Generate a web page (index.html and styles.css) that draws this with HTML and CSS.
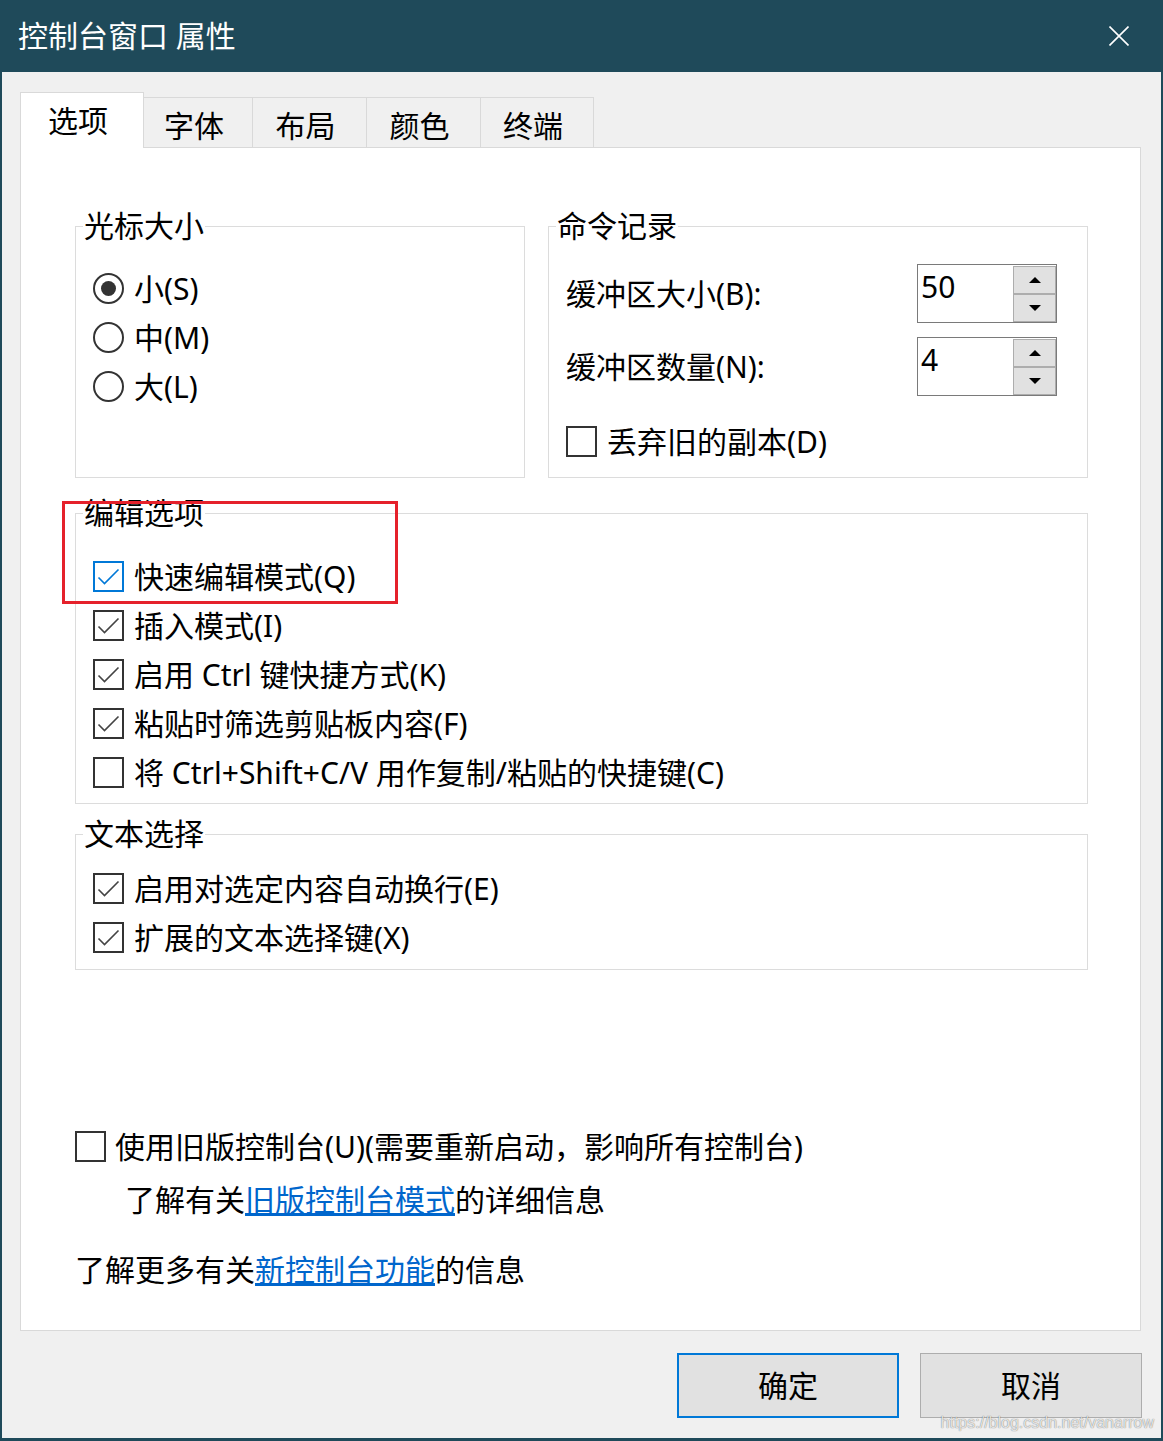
FILE: index.html
```html
<!DOCTYPE html>
<html lang="zh-CN">
<head>
<meta charset="utf-8">
<title>控制台窗口 属性</title>
<link rel="stylesheet" href="styles.css">
</head>
<body>
<div class="window">
  <div class="titlebar">
    <span class="title">控制台窗口 属性</span>
    <svg class="close" width="20" height="20" viewBox="0 0 20 20"><path d="M0.5 0.5 L19.5 19.5 M19.5 0.5 L0.5 19.5" stroke="#ffffff" stroke-width="1.6" fill="none"/></svg>
  </div>
  <div class="client">
    <div class="tabs">
      <div class="tab tab-active tab-options">选项</div>
      <div class="tab tab-font">字体</div>
      <div class="tab tab-layout">布局</div>
      <div class="tab tab-colors">颜色</div>
      <div class="tab tab-terminal">终端</div>
    </div>
    <div class="panel">
      <div class="group-row">
        <fieldset class="group group-cursor">
          <legend>光标大小</legend>
          <div class="group-body body-cursor">
            <div class="opt"><span class="radio"><span class="dot"></span></span><span>小(S)</span></div>
            <div class="opt"><span class="radio"></span><span>中(M)</span></div>
            <div class="opt"><span class="radio"></span><span>大(L)</span></div>
          </div>
        </fieldset>
        <fieldset class="group group-history">
          <legend>命令记录</legend>
          <div class="group-body body-history">
            <div class="spin-row">
              <span>缓冲区大小(B):</span>
              <div class="spin">
                <span class="spin-value">50</span>
                <div class="spin-btns">
                  <span class="spin-btn"><svg width="12" height="6" viewBox="0 0 12 6"><path d="M0 6 L6 0 L12 6 Z" fill="#000"/></svg></span>
                  <span class="spin-btn"><svg width="12" height="6" viewBox="0 0 12 6"><path d="M0 0 L6 6 L12 0 Z" fill="#000"/></svg></span>
                </div>
              </div>
            </div>
            <div class="spin-row">
              <span>缓冲区数量(N):</span>
              <div class="spin">
                <span class="spin-value">4</span>
                <div class="spin-btns">
                  <span class="spin-btn"><svg width="12" height="6" viewBox="0 0 12 6"><path d="M0 6 L6 0 L12 6 Z" fill="#000"/></svg></span>
                  <span class="spin-btn"><svg width="12" height="6" viewBox="0 0 12 6"><path d="M0 0 L6 6 L12 0 Z" fill="#000"/></svg></span>
                </div>
              </div>
            </div>
            <div class="opt discard"><span class="box"></span><span>丢弃旧的副本(D)</span></div>
          </div>
        </fieldset>
      </div>

      <fieldset class="group group-edit">
        <legend>编辑选项</legend>
        <div class="group-body body-edit">
          <div class="opt"><span class="box box-focus"><svg class="chk" width="27" height="27" viewBox="0 0 27 27"><path d="M3.5 14.5 L9.5 20.5 L23.5 6.5" fill="none" stroke="currentColor" stroke-width="1.6"/></svg></span><span>快速编辑模式(Q)</span></div>
          <div class="opt"><span class="box"><svg class="chk" width="27" height="27" viewBox="0 0 27 27"><path d="M3.5 14.5 L9.5 20.5 L23.5 6.5" fill="none" stroke="currentColor" stroke-width="1.6"/></svg></span><span>插入模式(I)</span></div>
          <div class="opt"><span class="box"><svg class="chk" width="27" height="27" viewBox="0 0 27 27"><path d="M3.5 14.5 L9.5 20.5 L23.5 6.5" fill="none" stroke="currentColor" stroke-width="1.6"/></svg></span><span>启用 Ctrl 键快捷方式(K)</span></div>
          <div class="opt"><span class="box"><svg class="chk" width="27" height="27" viewBox="0 0 27 27"><path d="M3.5 14.5 L9.5 20.5 L23.5 6.5" fill="none" stroke="currentColor" stroke-width="1.6"/></svg></span><span>粘贴时筛选剪贴板内容(F)</span></div>
          <div class="opt"><span class="box"></span><span>将 Ctrl+Shift+C/V 用作复制/粘贴的快捷键(C)</span></div>
        </div>
      </fieldset>

      <fieldset class="group group-select">
        <legend>文本选择</legend>
        <div class="group-body body-select">
          <div class="opt"><span class="box"><svg class="chk" width="27" height="27" viewBox="0 0 27 27"><path d="M3.5 14.5 L9.5 20.5 L23.5 6.5" fill="none" stroke="currentColor" stroke-width="1.6"/></svg></span><span>启用对选定内容自动换行(E)</span></div>
          <div class="opt"><span class="box"><svg class="chk" width="27" height="27" viewBox="0 0 27 27"><path d="M3.5 14.5 L9.5 20.5 L23.5 6.5" fill="none" stroke="currentColor" stroke-width="1.6"/></svg></span><span>扩展的文本选择键(X)</span></div>
        </div>
      </fieldset>

      <div class="opt legacy"><span class="box"></span><span>使用旧版控制台(U)(需要重新启动，影响所有控制台)</span></div>
      <div class="info info-legacy">了解有关<a href="#">旧版控制台模式</a>的详细信息</div>
      <div class="info info-new">了解更多有关<a href="#">新控制台功能</a>的信息</div>
    </div>
    <div class="footer">
      <div class="btn btn-default">确定</div>
      <div class="btn">取消</div>
    </div>
  </div>
  <div class="highlight"></div>
  <div class="watermark">https://blog.csdn.net/vanarrow</div>
</div>
</body>
</html>
```

FILE: styles.css
```css
* { box-sizing: border-box; }
html, body { margin: 0; padding: 0; }
body {
  width: 1163px;
  height: 1441px;
  overflow: hidden;
  font-family: "Noto Sans", "Noto Sans CJK SC", sans-serif;
  font-size: 30px;
  color: #000;
}

.window {
  position: relative;
  width: 1163px;
  height: 1441px;
  display: flex;
  flex-direction: column;
  background: #1f4a5a;
  padding: 0 2px 3px 2px;
}

.titlebar {
  height: 72px;
  flex: none;
  display: flex;
  align-items: center;
  justify-content: space-between;
  padding: 0 32px 0 16px;
  color: #fff;
}
.title { font-size: 30px; line-height: 36px; white-space: nowrap; }
.close { display: block; }

.client {
  flex: 1;
  background: #f0f0f0;
  padding: 20px 0 0 18px;
  display: flex;
  flex-direction: column;
}

/* tabs */
.tabs {
  display: flex;
  align-items: flex-end;
  height: 55px;
  flex: none;
}
.tab {
  height: 50px;
  border-top: 1px solid #d9d9d9;
  border-right: 1px solid #d9d9d9;
  background: #f0f0f0;
  display: flex;
  align-items: center;
  justify-content: center;
  padding: 7px 8px 0 0;
  line-height: 36px;
  white-space: nowrap;
}
.tab-active {
  height: 56px;
  margin-bottom: -1px;
  border-left: 1px solid #d9d9d9;
  background: #fff;
  position: relative;
  z-index: 1;
  padding: 0 8px 0 0;
}
.tab-options { width: 124px; }
.tab-font { width: 109px; }
.tab-layout { width: 114px; }
.tab-colors { width: 114px; }
.tab-terminal { width: 113px; }

/* panel */
.panel {
  flex: none;
  width: 1121px;
  height: 1184px;
  background: #fff;
  border: 1px solid #d9d9d9;
  padding: 62px 52px 0 54px;
}

.group-row { display: flex; gap: 23px; }
.group {
  margin: 0;
  padding: 0 8px 0 7px;
  border: 1px solid #dcdcdc;
  min-width: 0;
}
.group legend {
  padding: 0 1px;
  font-size: 30px;
  line-height: 32px;
  white-space: nowrap;
}
.group-cursor { width: 450px; }
.group-history { width: 540px; }
.group-body { padding-left: 10px; }
.body-cursor { padding-top: 22px; }
.body-history { padding-top: 22px; padding-bottom: 11px; }
.group-edit { margin-top: 19px; }
.body-edit { padding-top: 23px; padding-bottom: 6px; }
.group-select { margin-top: 14px; }
.body-select { padding-top: 14px; padding-bottom: 7px; }

.opt {
  display: flex;
  align-items: center;
  gap: 10px;
  height: 49px;
  line-height: 36px;
  white-space: nowrap;
}

.box {
  width: 31px;
  height: 31px;
  flex: none;
  border: 2px solid #333;
  display: flex;
  color: #444;
}
.box-focus { border-color: #0078d7; color: #0078d7; }
.chk { display: block; }

.radio {
  width: 31px;
  height: 31px;
  flex: none;
  border: 2px solid #333;
  border-radius: 50%;
  display: flex;
  align-items: center;
  justify-content: center;
}
.dot {
  width: 15px;
  height: 15px;
  border-radius: 50%;
  background: #333;
}

/* spin boxes */
.spin-row {
  display: grid;
  grid-template-columns: 351px 140px;
  align-items: center;
  line-height: 36px;
  white-space: nowrap;
}
.spin-row + .spin-row { margin-top: 14px; }
.spin {
  width: 140px;
  height: 59px;
  border: 1px solid #7a7a7a;
  display: flex;
  background: #fff;
}
.spin-value {
  flex: 1;
  padding: 4px 0 0 3px;
  line-height: 36px;
}
.spin-btns {
  width: 43px;
  flex: none;
  display: flex;
  flex-direction: column;
  padding-top: 1px;
}
.spin-btn {
  flex: 1;
  border: 1px solid #adadad;
  background: #e1e1e1;
  display: flex;
  align-items: center;
  justify-content: center;
}
.spin-btn svg { display: block; }
.discard { margin-top: 21px; }

/* bottom area */
.legacy { margin-top: 152px; gap: 9px; }
.info {
  height: 49px;
  line-height: 49px;
  white-space: nowrap;
}
.info-legacy { margin-top: 4px; padding-left: 50px; }
.info-new { margin-top: 21px; }
.info a { color: #0066cc; text-decoration: underline; }

.footer {
  display: flex;
  justify-content: flex-end;
  gap: 21px;
  margin-top: 22px;
  padding-right: 19px;
}
.btn {
  width: 222px;
  height: 65px;
  background: #e1e1e1;
  border: 1px solid #adadad;
  display: flex;
  align-items: center;
  justify-content: center;
  line-height: 36px;
}
.btn-default { border: 2px solid #0078d7; }

/* overlays */
.highlight {
  position: absolute;
  left: 62px;
  top: 501px;
  width: 336px;
  height: 103px;
  border: 3px solid #e5212b;
  pointer-events: none;
}
.watermark {
  position: absolute;
  right: 9px;
  bottom: 10px;
  font-family: "Liberation Sans", Arial, sans-serif;
  font-size: 16px;
  line-height: 16px;
  color: rgba(255, 255, 255, 0.8);
  text-shadow: 0 0 1px rgba(0, 0, 0, 0.35), 0 0 1px rgba(0, 0, 0, 0.35);
  white-space: nowrap;
}
```
